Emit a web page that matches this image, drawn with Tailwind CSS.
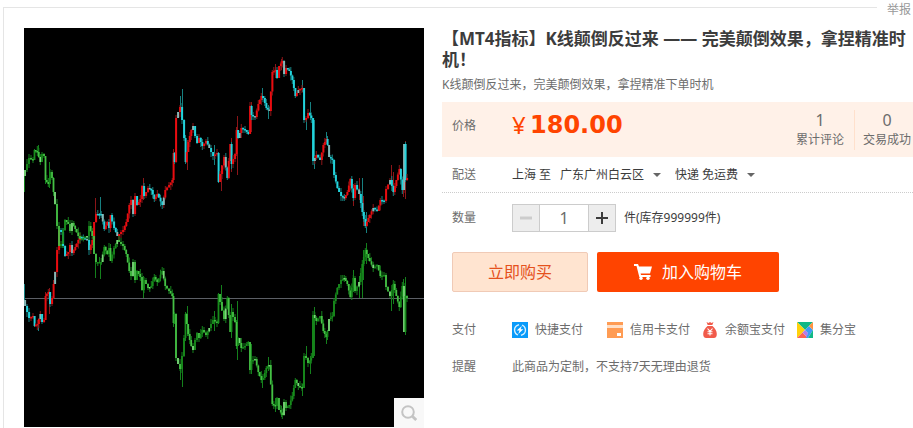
<!DOCTYPE html>
<html lang="zh-CN">
<head>
<meta charset="utf-8">
<meta name="viewport" content="width=device-width, initial-scale=1">
<title>MT4指标</title>
<script src="https://cdn.jsdelivr.net/npm/@tailwindcss/browser@4"></script>
</head>
<body class="bg-white pt-[7px] pl-[3px] font-['Noto_Sans','Noto_Sans_CJK_SC',sans-serif] text-xs text-[#6c6c6c]">
<div class="relative flex min-h-[calc(100vh-7px)] items-start gap-[18px] border-t border-l border-[#e5e5e5] pt-5 pl-5">
  <a href="#" class="absolute -top-2 right-0 bg-white pr-0.5 pl-2.5 leading-5 text-[#999]">举报</a>

  <div class="relative w-[400px] shrink-0">
    <svg id="chart" class="block w-full bg-black" viewBox="24 28 400 399" role="img" aria-label="K线图"></svg>
    <button type="button" aria-label="放大" class="absolute right-0 -bottom-px flex size-[30px] items-center justify-center bg-[#f8f8f8]">
      <svg class="size-4" viewBox="0 0 16 16" fill="none" stroke="#c4c4c4"><circle cx="7" cy="7" r="5.8" stroke-width="2"/><path d="M11 11l4.2 4" stroke-width="2.8"/></svg>
    </button>
  </div>

  <main class="min-w-0 flex-1">
    <h1 class="text-[17px] leading-[21px] font-bold text-[#3c3c3c]">【MT4指标】K线颠倒反过来 —— 完美颠倒效果，拿捏精准时机！</h1>
    <p class="mt-[5px] leading-5">K线颠倒反过来，完美颠倒效果，拿捏精准下单时机</p>

    <div class="mt-[7px] flex h-[55px] items-center bg-[#fff1e8] pl-2.5">
      <span class="w-[60px] -mt-2">价格</span>
      <strong class="flex flex-1 -mt-2.5 gap-1 text-2xl text-[#ff4400] font-['DejaVu_Sans',sans-serif]"><span class="w-3.5 font-normal font-['Noto_Sans']">¥</span>180.00</strong>
      <div class="pr-2.5 text-center"><div class="text-base leading-5">1</div><div class="leading-5">累计评论</div></div>
      <div class="border-l border-[#ffe0cc] pr-0.5 pl-2 text-center"><div class="text-base leading-5">0</div><div class="leading-5">交易成功</div></div>
    </div>

    <div class="flex h-9 items-center border-b border-dotted border-[#ccc] pl-2.5">
      <label for="area" class="w-[60px] shrink-0">配送</label>
      <div class="flex items-center text-[#3c3c3c]">
        <span class="w-12">上海 至</span>
        <span class="relative">
          <select id="area" class="block appearance-none pr-4 leading-5"><option>广东广州白云区</option></select>
          <svg class="pointer-events-none absolute top-2 right-0 h-1 w-2" viewBox="0 0 8 4"><path d="M0 0h8L4 4z" fill="#666"/></svg>
        </span>
        <span class="relative ml-3.5">
          <select aria-label="快递" class="block appearance-none pr-4 leading-5"><option>快递 免运费</option></select>
          <svg class="pointer-events-none absolute top-2 right-0 h-1 w-2" viewBox="0 0 8 4"><path d="M0 0h8L4 4z" fill="#666"/></svg>
        </span>
      </div>
    </div>

    <div class="mt-[11px] flex items-center pl-2.5">
      <label for="qty" class="w-[60px]">数量</label>
      <div class="flex h-7 border border-[#ccc]">
        <button type="button" aria-label="减少" class="flex w-[26px] items-center justify-center bg-[#ededed]"><svg class="size-3" viewBox="0 0 12 12"><path d="M0 4.5h12v3H0z" fill="#ccc"/></svg></button>
        <input id="qty" value="1" class="w-[50px] border-x border-[#ccc] text-center text-base">
        <button type="button" aria-label="增加" class="flex w-[26px] items-center justify-center bg-[#ededed]"><svg class="size-3" viewBox="0 0 12 12"><path d="M0 5h5V0h2v5h5v2H7v5H5V7H0z" fill="#3c3c3c"/></svg></button>
      </div>
      <span class="ml-2 text-[#3c3c3c]">件(库存999999件)</span>
    </div>

    <div class="mt-5 flex gap-[9px] pl-2.5 text-base">
      <button type="button" class="h-10 w-[136px] rounded-xs border border-[#f0cab6] bg-[#ffe4d0] text-[#e5511d]">立即购买</button>
      <button type="button" class="flex h-10 w-[182px] items-center justify-center gap-2.5 rounded-xs bg-[#ff4400] text-white">
        <svg class="h-4 w-[18px]" viewBox="0 0 18 16" fill="#fff"><path d="M0 0h4l1 2.500h13l-2 7H6.600l.4 1.500h9.500v2H5.300L2.500 2H0z"/><circle cx="7" cy="14.300" r="1.700"/><circle cx="14" cy="14.300" r="1.700"/></svg>
        加入购物车</button>
    </div>

    <div class="mt-7 flex items-center pl-2.5 leading-5">
      <span class="w-[60px] shrink-0">支付</span>
      <ul class="flex">
        <li class="flex w-[95px] items-center gap-[7px] whitespace-nowrap"><svg class="size-4 shrink-0" viewBox="0 0 16 16"><path fill="#0a9bfa" d="M0 0h16v16H0z"/><path d="M6 13a5.400 5.400 0 0 1-1.500-9.200L7 2.600M10 3a5.400 5.400 0 0 1 1.500 9.200L9 13.400" fill="none" stroke="#d8f1ff" stroke-width="1.300"/><path fill="#fff" d="M9.800 4L4.700 8.600h2.800L6.300 12l5-4.700H8.600z"/></svg>快捷支付</li>
        <li class="flex w-[95px] items-center gap-[7px] whitespace-nowrap"><svg class="size-4 shrink-0" viewBox="0 0 16 16"><path fill="#ff9c54" d="M0 0h16v3H0zM0 6h16v10H0z"/><path fill="#ffe0c8" d="M0 3h16v3H0z"/><path fill="#fff" d="M10 11h4v3h-4z"/></svg>信用卡支付</li>
        <li class="flex w-[95px] items-center gap-[7px] whitespace-nowrap"><svg class="size-4 shrink-0" viewBox="0 0 16 16"><path fill="#f15b4b" d="M4.500 0l2 1L8 0l1.500 1 2-1-1.200 3H5.700zM5.500 4h5c2.500 2 4.300 5 4.300 8 0 2.500-1 4-3 4H4.200c-2 0-3-1.500-3-4 0-3 1.800-6 4.300-8z"/><path d="M5.500 6.500L8 9.300l2.500-2.800M8 9v4.500M5.500 9.700h5M5.500 11.700h5" fill="none" stroke="#fff" stroke-width="1.100"/></svg>余额宝支付</li>
        <li class="flex w-[95px] items-center gap-[7px] whitespace-nowrap"><svg class="size-4 shrink-0" viewBox="0 0 16 16"><path fill="#10b886" d="M0 0h16L8 8z"/><path fill="#ffd20a" d="M0 0l8 8-8 8z"/><path fill="#fc6454" d="M0 16l5.500-5.500L11 16z"/><path fill="#b77be8" d="M8 8l3 3-1 4-4.500-4.500z"/><path fill="#3f9af5" d="M8 8l4-4 4 4-5 8H9l2-5z"/><path fill="#ff9340" d="M16 0v8l-4-4z"/><path fill="#10b886" d="M16 8v8h-5z"/></svg>集分宝</li>
      </ul>
    </div>

    <div class="mt-[17px] flex pl-2.5 leading-5">
      <span class="w-[60px] shrink-0">提醒</span>
      <span>此商品为定制，不支持7天无理由退货</span>
    </div>
  </main>
</div>

<script>
// Turning points of the price line as x,y pairs.
const points = `24,300 26,306 30,318 34,316 35,326 38,324 41,314 43,322 45,320 46,296 49,292 51,304 53,298 54,284 56,272 58,250 60,230 62,232 64,246 66,256 69,252 71,245 73,253 76,247 79,240 81,237 84,238 88,240 90,250 93,240 95,222 97,214 102,214 105,229 108,222 110,228 111,215 115,228 118,236 120,234 124,230 127,222 130,205 132,200 134,214 136,196 138,205 141,199 143,186 145,196 149,188 152,190 155,199 158,194 163,205 166,190 170,185 173,180 174,153 175,162 177,118 179,112 181,107 183,120 185,138 186,162 189,142 192,130 194,126 196,136 198,143 200,138 203,146 207,141 210,148 214,156 218,153 219,182 221,174 225,157 228,178 231,144 232,164 236,154 237,130 239,138 242,128 246,130 249,134 251,106 252,115 256,117 259,104 262,96 264,98 267,108 270,111 273,72 276,70 278,78 280,66 283,61 285,74 287,68 290,71 293,80 296,96 299,90 303,88 305,120 307,118 309,113 312,118 314,161 317,155 321,160 324,145 327,139 328,145 330,157 333,160 335,175 338,188 342,196 345,198 348,192 351,179 354,198 356,185 360,194 363,212 366,226 369,218 374,208 378,211 381,200 385,201 387,189 391,180 394,192 397,180 400,169 403,190 405,144 406,180 408,178`.split(' ').map(p => p.split(',').map(Number));
// Long wicks: x, top, bottom
const wicks = [[24,284,300],[38,320,331],[49,288,314],[95,198,222],[100,197,214],[143,178,200],[182,89,112],[180,96,110],[187,140,170],[221,165,191],[214,145,165],[231,138,172],[237,116,175],[251,102,132],[262,88,100],[268,105,119],[275,64,78],[281,59,70],[302,80,92],[306,118,130],[310,102,120],[314,120,169],[326,132,144],[353,184,206],[359,178,200],[362,178,212],[366,212,233],[363,196,226],[391,165,185],[393,172,193],[403,180,197],[405,141,199]];
const mirror = y => 476 - y;
let out = '<path d="M24 298.500h400" stroke="#5c5f66"/>';
const bar = (x, a, b, w, fill) => `<rect x="${x.toFixed(1)}" y="${Math.min(a, b).toFixed(1)}" width="${w}" height="${Math.max(1.500, Math.abs(a - b)).toFixed(1)}" fill="${fill}"/>`;
for (const [x, a, b] of wicks) {
  out += bar(x, a, b, 1, x % 2 ? '#8c1518' : '#178080');
  out += bar(x, mirror(a), mirror(b), 1, '#14801c');
}
let n = 0;
for (let i = 1; i < points.length; i++) {
  const [x0, y0] = points[i - 1], [x1, y1] = points[i];
  const steps = Math.max(1, Math.round((x1 - x0) / 1.800));
  for (let s = 0; s < steps; s++, n++) {
    const x = x0 + (x1 - x0) * (s + .5) / steps;
    const a = y0 + (y1 - y0) * s / steps, b = y0 + (y1 - y0) * (s + 1) / steps;
    const up = b < a, lo = Math.min(a, b) - (n * 7 % 5), hi = Math.max(a, b) + (n * 11 % 6);
    const light = n % 9 === 0;
    out += bar(x - .5, lo, hi, 1, up ? '#8c1518' : '#178080');
    out += bar(x - .5, mirror(lo), mirror(hi), 1, '#14801c');
    out += bar(x - .9, a, b, 2, light ? '#86b8b8' : up ? '#e80c10' : '#22d3dc');
    out += bar(x - .9, mirror(a), mirror(b), 1.800, light ? '#7ad87a' : up ? '#45c045' : '#188c1c');
  }
}
document.getElementById('chart').innerHTML = out;
</script>
</body>
</html>
